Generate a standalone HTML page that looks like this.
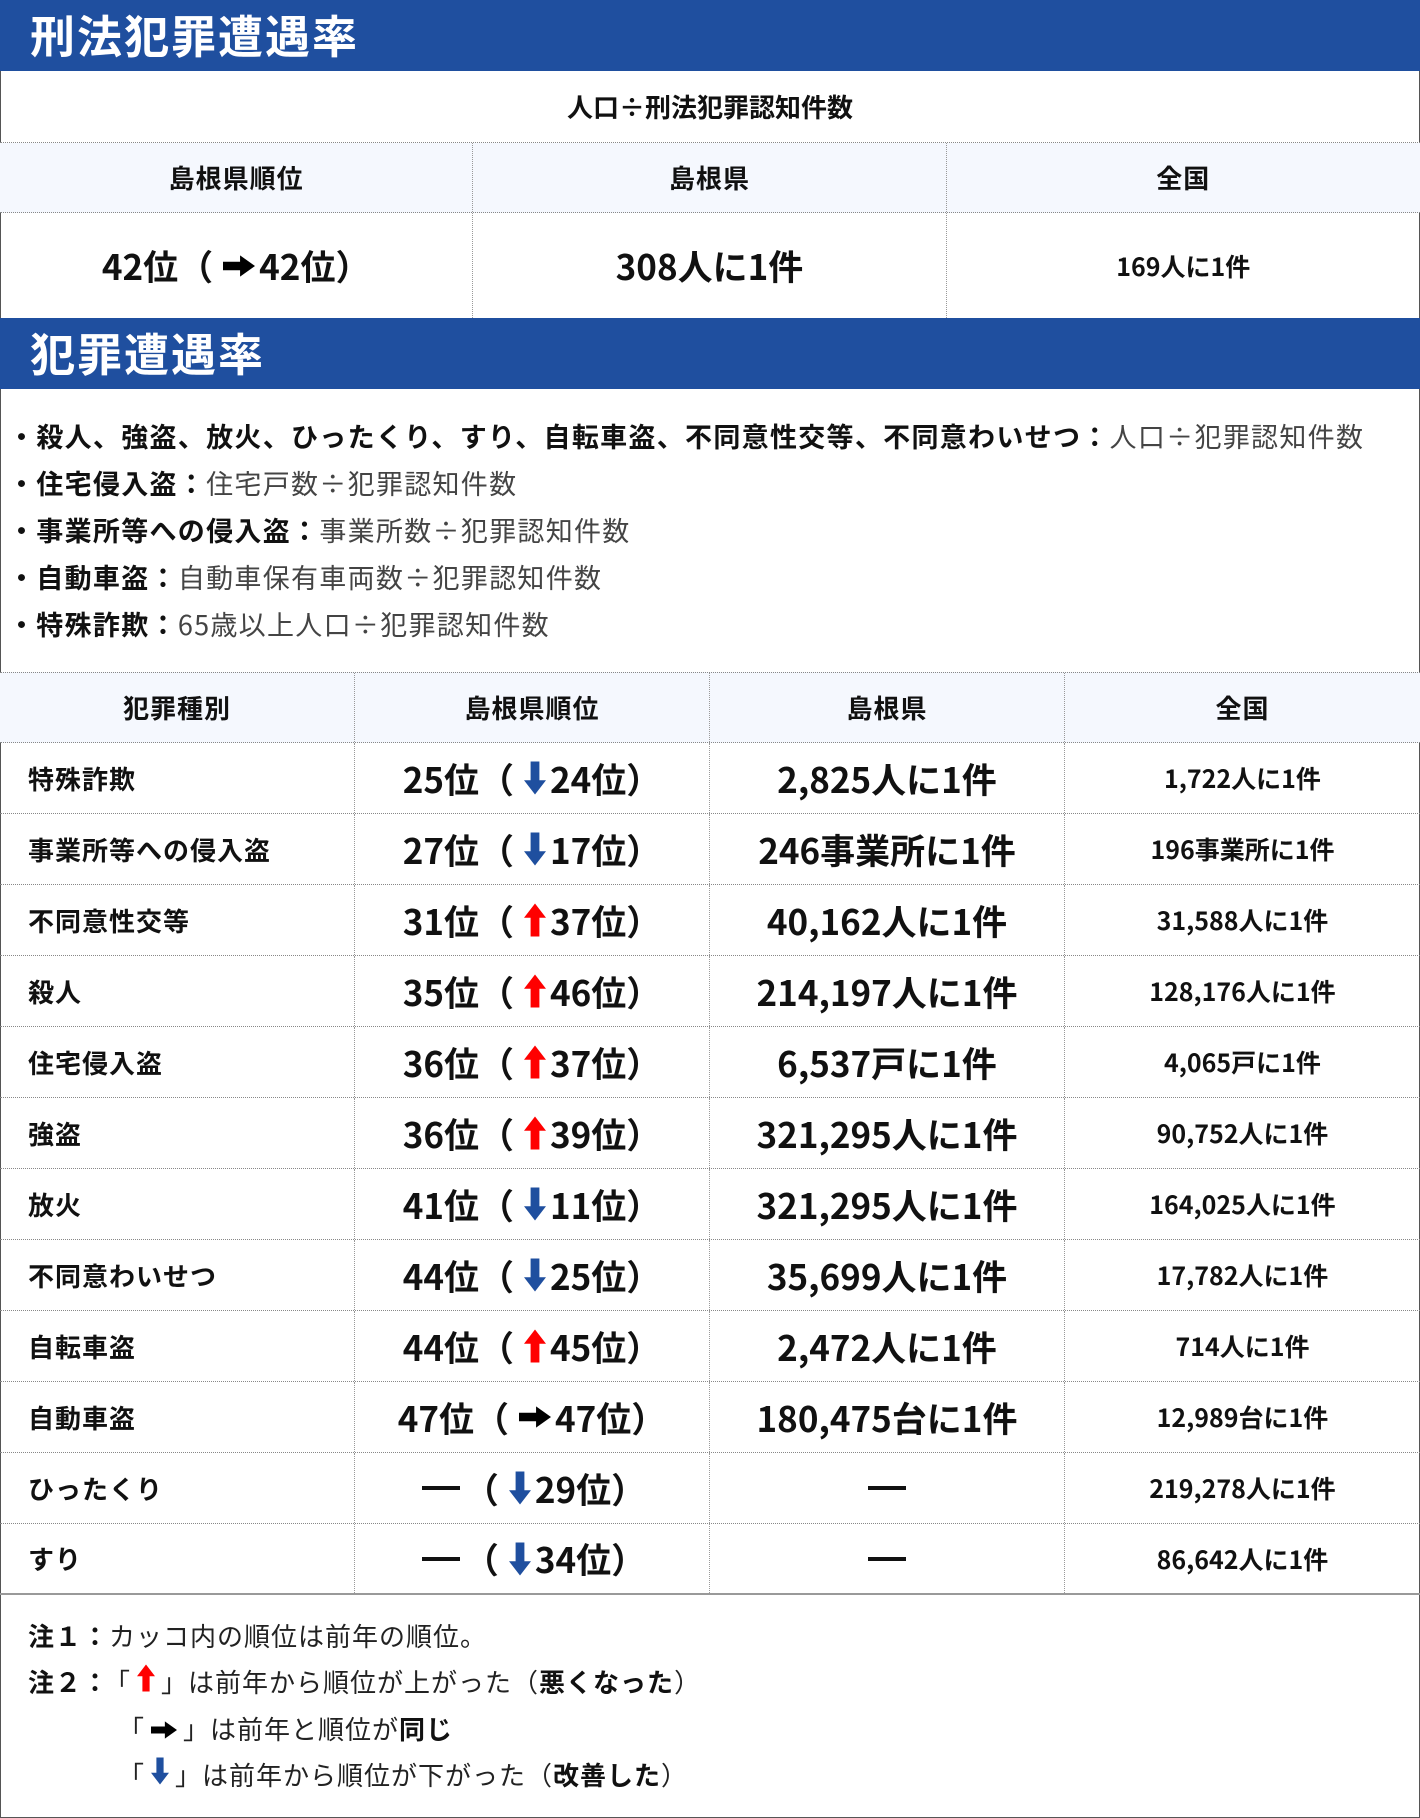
<!DOCTYPE html>
<html><head><meta charset="utf-8">
<style>
*{margin:0;padding:0;box-sizing:border-box}
body{width:1420px;height:1818px;background:#fff;font-family:"Noto Sans CJK JP","Liberation Sans",sans-serif;color:#111;position:relative;overflow:hidden}
.frame{position:absolute;left:0;top:0;width:1420px;height:1818px;border:1px solid #555}
.bar{position:absolute;left:0;width:1420px;height:71px;background:#1f4f9f;color:#fff;font-weight:bold;font-size:45px;padding-left:30px;line-height:68px;letter-spacing:2px}
.row{position:absolute;left:0;width:1420px;display:flex;border-bottom:1px dotted #888}
.row>div{display:flex;align-items:center;justify-content:center;border-right:1px dotted #999;font-weight:bold}
.row>div:last-child{border-right:none}
.hd{background:#f5f8fe}
.c3{width:473.3px}
.c4{width:355px}
.big{font-size:35px}
.sm{font-size:25px}
.lbl{justify-content:flex-start!important;padding-left:28px;font-size:26px;letter-spacing:1px}
.hdt{font-size:26px;letter-spacing:1px}
.bul{position:absolute;left:8px;font-size:27px;letter-spacing:1.3px;font-weight:bold;white-space:nowrap;line-height:40px}
.bul span{font-weight:normal;color:#444}
.note{position:absolute;font-size:26px;white-space:nowrap;color:#222;letter-spacing:1px;line-height:40px}
.note b{color:#111}
svg{display:inline-block}
.a{margin:0 4px 0 10px}
.n{margin:0 6px}
.dash{display:inline-block;width:38px;height:4px;background:#111;margin:0 4px}
</style></head><body>
<div class="frame"></div>
<div class="bar" style="top:0">刑法犯罪遭遇率</div>
<div class="row" style="top:71px;height:72px"><div style="width:1420px;font-size:26px">人口÷刑法犯罪認知件数</div></div>
<div class="row hd" style="top:143px;height:70px"><div class="c3 hdt">島根県順位</div><div class="c3 hdt">島根県</div><div class="c3 hdt">全国</div></div>
<div class="row" style="top:213px;height:105px;border-bottom:none"><div class="c3 big">42位（<svg class="a" width="32" height="22" viewBox="0 0 30 20"><path d="M0 6h16V0l14 10-14 10v-6H0z" fill="#000"/></svg>42位）</div><div class="c3 big">308人に1件</div><div class="c3 sm">169人に1件</div></div>
<div class="bar" style="top:318px">犯罪遭遇率</div>

<div class="bul" style="top:416px">・殺人、強盗、放火、ひったくり、すり、自転車盗、不同意性交等、不同意わいせつ：<span>人口÷犯罪認知件数</span></div>
<div class="bul" style="top:463px">・住宅侵入盗：<span>住宅戸数÷犯罪認知件数</span></div>
<div class="bul" style="top:510px">・事業所等への侵入盗：<span>事業所数÷犯罪認知件数</span></div>
<div class="bul" style="top:557px">・自動車盗：<span>自動車保有車両数÷犯罪認知件数</span></div>
<div class="bul" style="top:604px">・特殊詐欺：<span>65歳以上人口÷犯罪認知件数</span></div>

<div class="row hd" style="top:672px;height:71px;border-top:1px dotted #888"><div class="c4 hdt">犯罪種別</div><div class="c4 hdt">島根県順位</div><div class="c4 hdt">島根県</div><div class="c4 hdt">全国</div></div>

<div id="rows"></div>
<script>
var D='<svg class="a" width="22" height="34" viewBox="0 0 20 30"><path d="M6 0h8v17h6L10 30 0 17h6z" fill="#1f4f9f"/></svg>';
var U='<svg class="a" width="22" height="34" viewBox="0 0 20 30"><path d="M6 30h8V13h6L10 0 0 13h6z" fill="#f00"/></svg>';
var R='<svg class="a" width="32" height="22" viewBox="0 0 30 20"><path d="M0 6h16V0l14 10-14 10v-6H0z" fill="#000"/></svg>';
var M='<span class="dash"></span>';
var rows=[
["特殊詐欺","25位（"+D+"24位）","2,825人に1件","1,722人に1件"],
["事業所等への侵入盗","27位（"+D+"17位）","246事業所に1件","196事業所に1件"],
["不同意性交等","31位（"+U+"37位）","40,162人に1件","31,588人に1件"],
["殺人","35位（"+U+"46位）","214,197人に1件","128,176人に1件"],
["住宅侵入盗","36位（"+U+"37位）","6,537戸に1件","4,065戸に1件"],
["強盗","36位（"+U+"39位）","321,295人に1件","90,752人に1件"],
["放火","41位（"+D+"11位）","321,295人に1件","164,025人に1件"],
["不同意わいせつ","44位（"+D+"25位）","35,699人に1件","17,782人に1件"],
["自転車盗","44位（"+U+"45位）","2,472人に1件","714人に1件"],
["自動車盗","47位（"+R+"47位）","180,475台に1件","12,989台に1件"],
["ひったくり",M+"（"+D+"29位）",M,"219,278人に1件"],
["すり",M+"（"+D+"34位）",M,"86,642人に1件"]];
var h='';
rows.forEach(function(r,i){
 var last=i==11?'border-bottom:2px solid #999;':'';
 h+='<div class="row" style="top:'+(743+71*i)+'px;height:71px;'+last+'"><div class="c4 lbl">'+r[0]+'</div><div class="c4 big">'+r[1]+'</div><div class="c4 big">'+r[2]+'</div><div class="c4 sm">'+r[3]+'</div></div>';
});
document.getElementById('rows').innerHTML=h;
</script>

<div class="note" style="left:28px;top:1616px"><b>注１：</b>カッコ内の順位は前年の順位。</div>
<div class="note" style="left:28px;top:1662px"><b>注２：</b><span style="margin-left:8px">「</span><svg class="n" width="18" height="28" viewBox="0 0 20 30"><path d="M6 30h8V13h6L10 0 0 13h6z" fill="#f00"/></svg>」は前年から順位が上がった（<b>悪くなった</b>）</div>
<div class="note" style="left:118px;top:1709px">「<svg class="n" width="26" height="18" viewBox="0 0 30 20"><path d="M0 6h16V0l14 10-14 10v-6H0z" fill="#000"/></svg>」は前年と順位が<b>同じ</b></div>
<div class="note" style="left:118px;top:1755px">「<svg class="n" width="18" height="28" viewBox="0 0 20 30"><path d="M6 0h8v17h6L10 30 0 17h6z" fill="#1f4f9f"/></svg>」は前年から順位が下がった（<b>改善した</b>）</div>
</body></html>
